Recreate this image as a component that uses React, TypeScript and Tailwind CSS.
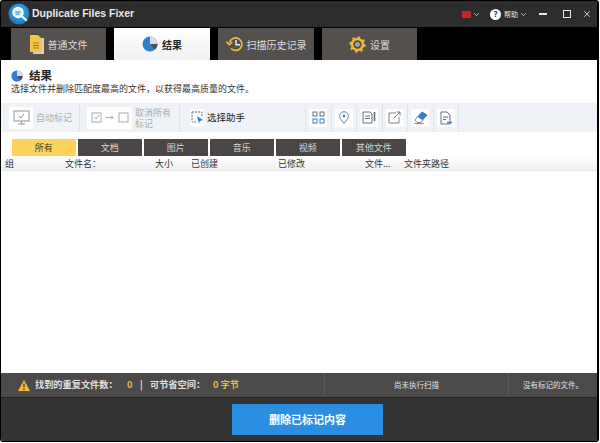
import React from 'react';
import { ChevronDown, X } from 'lucide-react';

const cjk = { fontFamily: '"Noto Sans CJK SC", "Liberation Sans", sans-serif' };

const PieIcon = ({ size = 16 }: { size?: number }) => (
	<svg width={size} height={size} viewBox="0 0 16 16">
		<circle cx="8" cy="8" r="7.5" fill="#2f7fd0" />
		<path d="M8 .5 A7.5 7.5 0 0 1 15.5 8 L12 10.5 L8 8 Z" fill="#d9dde2" />
		<path d="M8 8 L15.5 8 A7.5 7.5 0 0 1 13 13.5 Z" fill="#4a4f55" />
	</svg>
);

const FileIcon = () => (
	<svg width="14" height="19" viewBox="0 0 14 19">
		<path d="M3 3 H14 V19 H3 Z" fill="#d9d2b8" />
		<path d="M0 0 H8 L12 4 V17 H0 Z" fill="#f3c744" />
		<path d="M3 8 H9 M3 10.5 H9 M3 13 H9" stroke="#9a7a1c" strokeWidth="1" />
	</svg>
);

const HistoryIcon = () => (
	<svg width="17" height="16" viewBox="0 0 17 16" fill="none" stroke="#e9b93c" strokeWidth="1.7">
		<path d="M3.5 6.5 A6.3 6.3 0 1 1 5 12.5" />
		<path d="M0.5 5.5 L3.3 8.8 L6.3 6" />
		<path d="M10 4 V8.8 H14" stroke="#f0f0f0" strokeWidth="1.4" />
	</svg>
);

const GearIcon = () => (
	<svg width="17" height="17" viewBox="0 0 17 17">
		<circle cx="8.5" cy="8.5" r="5.5" fill="none" stroke="#e9b93c" strokeWidth="2.6" />
		<circle cx="8.5" cy="8.5" r="7.2" fill="none" stroke="#e9b93c" strokeWidth="2" strokeDasharray="2.4 3.25" />
		<circle cx="8.5" cy="8.5" r="1.8" fill="#8a8a84" stroke="#e8e8e8" strokeWidth="0.8" />
	</svg>
);

const Logo = () => (
	<svg width="22" height="22" viewBox="0 0 22 22">
		<defs>
			<radialGradient id="logoFill" cx="0.5" cy="0.4" r="0.65">
				<stop offset="0" stopColor="#4fb4ea" />
				<stop offset="1" stopColor="#136fb5" />
			</radialGradient>
		</defs>
		<circle cx="11" cy="11" r="10.5" fill="url(#logoFill)" />
		<circle cx="10" cy="9.5" r="5" fill="#d9f0fa" stroke="#ffffff" strokeWidth="1.4" />
		<path d="M7.3 9 H12.7 M7.5 11 H11.5" stroke="#2a86c4" strokeWidth="1" />
		<path d="M13.5 13 L18 17" stroke="#ffffff" strokeWidth="2.2" strokeLinecap="round" />
	</svg>
);

const Tab = ({
	icon,
	label,
	active,
	width,
}: {
	icon: React.ReactNode;
	label: string;
	active?: boolean;
	width: string;
}) => (
	<div
		className={`flex h-[32px] items-center justify-center gap-[4px] text-[10px] ${width} ${
			active ? 'bg-gradient-to-b from-white to-[#f1f1f1] font-bold text-[#222]' : 'bg-[#53504e] text-[#dcdcdc]'
		}`}
	>
		{icon}
		<span>{label}</span>
	</div>
);

const ToolIcon = ({ children }: { children: React.ReactNode }) => (
	<div className="flex h-[29px] w-[25.5px] items-center justify-center border-r border-[#e0e6ec]">
		<div className="flex h-[18px] w-[18px] items-center justify-center bg-white">{children}</div>
	</div>
);

const categories = ['文档', '图片', '音乐', '视频', '其他文件'];

const columns = [
	{ label: '组', w: 'w-[64px] pl-[4px]' },
	{ label: '文件名：', w: 'w-[90px]' },
	{ label: '大小', w: 'w-[36px]' },
	{ label: '已创建', w: 'w-[87px]' },
	{ label: '已修改', w: 'w-[87px]' },
	{ label: '文件...', w: 'w-[39px]' },
	{ label: '文件夹路径', w: 'w-[70px]' },
];

export default function App() {
	return (
		<div className="h-[443px] w-[600px] overflow-hidden bg-white" style={cjk}>
			<div className="flex h-[442px] w-[599px] flex-col overflow-hidden rounded-[3px] border-t border-r-2 border-b border-l border-black bg-black">
				{/* Title bar */}
				<div className="flex h-[26px] items-center bg-[#2d2d2d] pl-[7px]">
					<Logo />
					<span className="ml-[2px] text-[10.5px] font-bold text-[#e8e8e8]" style={{ fontFamily: '"Liberation Sans", sans-serif' }}>
						Duplicate Files Fixer
					</span>
					<div className="ml-auto flex items-center text-[#e5e5e5]">
						<div className="h-[7px] w-[9px] bg-[#c8242b]" />
						<ChevronDown size={9} strokeWidth={2} className="ml-[1px]" />
						<div className="ml-[9px] flex h-[11px] w-[11px] items-center justify-center rounded-full bg-white text-[8px] font-bold text-[#2d2d2d]">?</div>
						<span className="ml-[3px] text-[7px]">帮助</span>
						<ChevronDown size={9} strokeWidth={2} className="ml-[1px]" />
						<div className="ml-[11px] h-[1.5px] w-[8px] bg-[#e5e5e5]" />
						<div className="ml-[16px] h-[8px] w-[8px] border-[1.5px] border-[#e5e5e5]" />
						<X size={10} strokeWidth={2} className="ml-[11px] mr-[5px]" />
					</div>
				</div>

				{/* Tabs */}
				<div className="flex h-[33px] gap-[8px] pl-[10px] pt-[1px]">
					<Tab width="w-[95px]" icon={<FileIcon />} label="普通文件" />
					<Tab width="w-[96px]" icon={<PieIcon />} label="结果" active />
					<Tab width="w-[96px]" icon={<HistoryIcon />} label="扫描历史记录" />
					<Tab width="w-[95px]" icon={<GearIcon />} label="设置" />
				</div>

				{/* Content */}
				<div className="flex flex-1 flex-col bg-white">
					<div className="h-[43px] pl-[10px] pt-[9px]">
						<div className="flex items-center gap-[6px]">
							<PieIcon size={12} />
							<span className="text-[11.5px] leading-[13px] font-bold text-[#222]">结果</span>
						</div>
						<div className="mt-[1px] text-[9px] leading-[12px] text-[#333]">选择文件并删除匹配度最高的文件，以获得最高质量的文件。</div>
					</div>

					{/* Toolbar */}
					<div className="flex h-[29px] items-center bg-[#eff3f7] text-[9px]">
						<div className="flex h-full w-[79px] items-center gap-[3px] border-r border-[#e0e6ec] pl-[8px] text-[#a9adb1]">
							<div className="flex h-[22px] w-[24px] items-center justify-center bg-white">
								<svg width="17" height="15" viewBox="0 0 17 15" fill="none" stroke="#8c9299">
									<rect x="1" y="1" width="15" height="10" />
									<path d="M5 14 H12 M8.5 11 V14" />
									<path d="M6 6 L8 8 L11 4" stroke="#6aa0c8" />
								</svg>
							</div>
							<span>自动标记</span>
						</div>
						<div className="flex h-full w-[100px] items-center gap-[3px] border-r border-[#e0e6ec] pl-[7px] text-[#a9adb1]">
							<div className="flex h-[22px] w-[45px] items-center justify-center bg-white">
								<svg width="38" height="11" viewBox="0 0 38 11" fill="none" stroke="#a6abb0">
									<rect x="1" y="1" width="9" height="9" />
									<path d="M3 5 L5 7 L8 3" />
									<path d="M15 5.5 H22 M20 3.5 L22 5.5 L20 7.5" />
									<rect x="28" y="1" width="9" height="9" />
								</svg>
							</div>
							<span className="w-[38px] leading-[11px]">取消所有标记</span>
						</div>
						<div className="flex h-full w-[126px] items-center gap-[3px] border-r border-[#e0e6ec] pl-[10px] text-[#222]">
							<div className="flex h-[17px] w-[14px] items-center justify-center bg-white">
								<svg width="13" height="13" viewBox="0 0 13 13" fill="none" stroke="#6b7077">
									<path d="M1 1 H11 V5 M1 1 V11 H5" strokeDasharray="2 1" />
									<path d="M6 5 L12 9 L9 10 L8 12.5 Z" fill="#2f7fd0" stroke="none" />
								</svg>
							</div>
							<span className="text-[9.5px]">选择助手</span>
						</div>
						<ToolIcon>
							<svg width="13" height="13" viewBox="0 0 13 13" fill="none" stroke="#6b7077">
								<rect x="1" y="1" width="4" height="4" />
								<rect x="8" y="1" width="4" height="4" />
								<rect x="1" y="8" width="4" height="4" stroke="#2f7fd0" />
								<rect x="8" y="8" width="4" height="4" stroke="#2f7fd0" />
							</svg>
						</ToolIcon>
						<ToolIcon>
							<svg width="10" height="13" viewBox="0 0 10 13" fill="none" stroke="#7d8389">
								<path d="M5 12.5 C2 9 .7 7 .7 5 A4.3 4.3 0 0 1 9.3 5 C9.3 7 8 9 5 12.5 Z" />
								<circle cx="5" cy="5" r="1.4" fill="#2f7fd0" stroke="none" />
							</svg>
						</ToolIcon>
						<ToolIcon>
							<svg width="14" height="13" viewBox="0 0 14 13" fill="none" stroke="#6b7077">
								<path d="M1 1 H8 L10 3 V12 H1 Z" />
								<path d="M3 5 H8 M3 7.5 H8" />
								<path d="M12.5 1 V10" strokeWidth="1.6" />
							</svg>
						</ToolIcon>
						<ToolIcon>
							<svg width="13" height="13" viewBox="0 0 13 13" fill="none" stroke="#7d8389">
								<path d="M8 2 H1 V12 H11 V6" />
								<path d="M6 7 L12 1 M8.5 1 H12 V4.5" stroke="#5f7f9a" />
							</svg>
						</ToolIcon>
						<ToolIcon>
							<svg width="15" height="13" viewBox="0 0 15 13">
								<path d="M9 0.5 L14.5 4 L10 9 L4.5 5.5 Z" fill="#2f7fd0" />
								<path d="M4.5 5.5 L10 9 L8 11.5 H4 L2 9 Z" fill="#ffffff" stroke="#666" strokeWidth="0.8" />
								<path d="M1 12.5 H11" stroke="#999" />
							</svg>
						</ToolIcon>
						<ToolIcon>
							<svg width="12" height="14" viewBox="0 0 12 14" fill="none" stroke="#6b7077">
								<path d="M1 1 H7 L10 4 V13 H1 Z" />
								<path d="M3 6 H8 M3 8.5 H6" />
								<path d="M7 11.5 H12" stroke="#2f7fd0" strokeWidth="1.6" />
							</svg>
						</ToolIcon>
					</div>

					{/* Category tabs */}
					<div className="mt-[7px] flex h-[17px] gap-[1.5px] pl-[10.5px] text-[9px]">
						<div className="flex w-[64.5px] items-center justify-center bg-[#fbd35c] text-[#4a3d15]">所有</div>
						{categories.map((c) => (
							<div key={c} className="flex w-[64.5px] items-center justify-center bg-[#4a4645] text-[#d5d5d5]">
								{c}
							</div>
						))}
					</div>

					{/* Column header */}
					<div className="flex h-[15px] items-center border-b border-[#e5e5e5] bg-gradient-to-b from-[#ffffff] to-[#f1f1f1] pt-[1px] text-[9px] text-[#333]">
						{columns.map((col) => (
							<div key={col.label} className={col.w}>
								{col.label}
							</div>
						))}
					</div>

					<div className="flex-1 bg-white" />

					{/* Status bar */}
					<div className="flex h-[25px] items-center border-b border-[#222] bg-[#4b4a49] text-[9.2px] text-[#e0e0e0]">
						<svg className="ml-[17px]" width="12" height="11" viewBox="0 0 12 11">
							<path d="M6 0 L12 11 H0 Z" fill="#f0bb3a" />
							<path d="M6 3.5 V7.5 M6 8.5 V10" stroke="#333" strokeWidth="1.2" />
						</svg>
						<span className="ml-[5px] w-[85px] font-bold whitespace-nowrap">找到的重复文件数：</span>
						<span className="ml-[7px] w-[6px] font-bold text-[#f0bb3a]">0</span>
						<span className="ml-[7px] w-[3px] font-bold">|</span>
						<span className="ml-[7px] w-[57px] font-bold whitespace-nowrap">可节省空间：</span>
						<span className="ml-[6px] w-[28px] font-bold whitespace-nowrap text-[#f0bb3a]">0 字节</span>
						<div className="ml-[83px] flex h-full w-[185px] items-center justify-center border-x border-[#5c5b5a] text-[7.5px]">尚未执行扫描</div>
						<div className="flex-1 text-center text-[7.5px]">没有标记的文件。</div>
					</div>

					{/* Action bar */}
					<div className="flex h-[43px] items-center bg-[#333333] pl-[231px]">
						<div className="flex h-[31px] w-[151px] items-center justify-center bg-[#2a8fe3] text-[11px] font-bold text-white">
							删除已标记内容
						</div>
					</div>
				</div>
			</div>
		</div>
	);
}
